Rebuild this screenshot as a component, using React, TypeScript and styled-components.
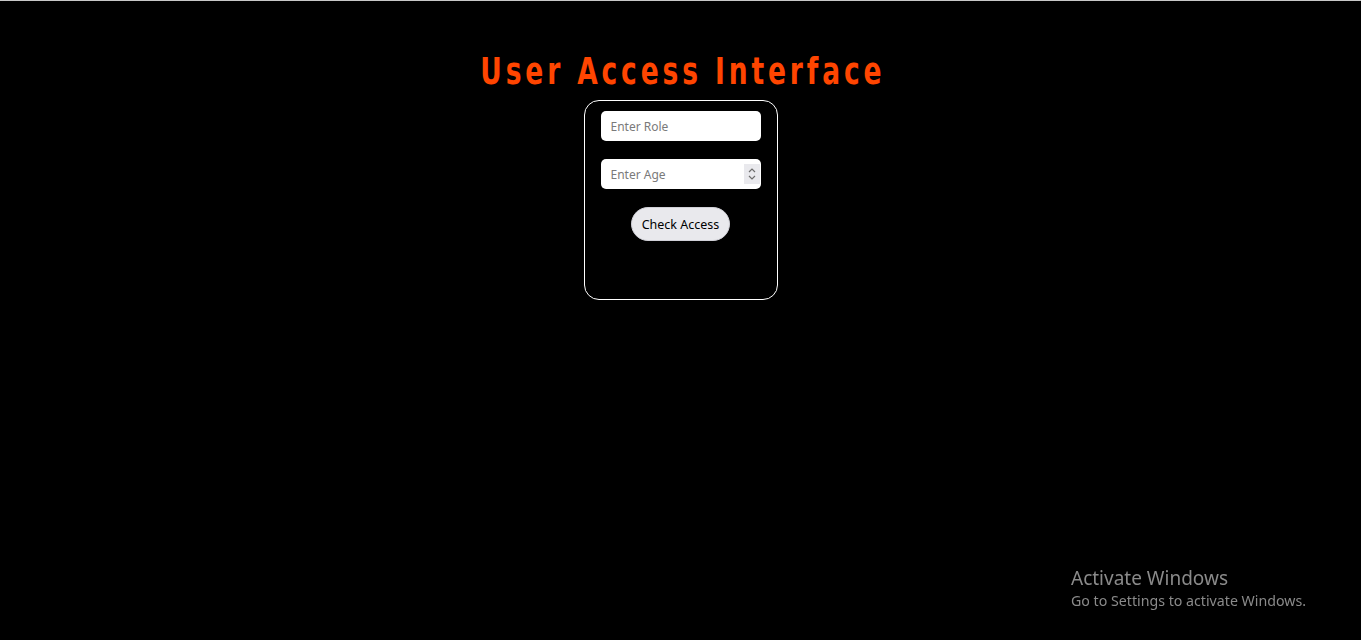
import React from 'react'
import styled, { createGlobalStyle } from 'styled-components'

const GlobalStyle = createGlobalStyle`
  html, body {
    margin: 0;
    padding: 0;
    background: #000;
    height: 100%;
  }
  body {
    border-top: 1px solid #c8c8c8;
    box-sizing: border-box;
    font-family: "Noto Sans", "Open Sans", sans-serif;
  }
`

const Page = styled.div`
  display: flex;
  flex-direction: column;
  align-items: center;
  min-height: 639px;
`

// no Impact here, so a condensed bold squeezed a little more
const Title = styled.h1`
  margin: 50px 0 9px;
  padding-left: 5px;
  font-family: "DejaVu Sans Condensed", "DejaVu Sans", sans-serif;
  font-weight: 700;
  font-size: 38px;
  line-height: 40px;
  letter-spacing: 5px;
  color: #ff4500;
  white-space: nowrap;
  transform: scaleX(0.775);
`

const Card = styled.form`
  width: 192px;
  border: 1px solid #fff;
  border-radius: 15px;
  padding: 10px 0 58px;
  display: flex;
  flex-direction: column;
  align-items: center;
  gap: 18px;
`

const Field = styled.div`
  position: relative;
  width: 160px;
  height: 30px;
`

const Input = styled.input`
  width: 100%;
  height: 100%;
  box-sizing: border-box;
  border: none;
  border-radius: 5px;
  padding: 0 10px;
  background: #fff;
  font-family: "Noto Sans", "Open Sans", sans-serif;
  font-size: 12px;
  color: #222;
  outline: none;
  &::placeholder {
    color: #7a7a7a;
  }
`

const Spinner = styled.div`
  position: absolute;
  right: 1px;
  top: 5px;
  width: 16px;
  height: 20px;
  background: #e9e9ed;
  display: flex;
  align-items: center;
  justify-content: center;
`

const Button = styled.button`
  width: 99px;
  height: 34px;
  border: 1px solid #d0d0d7;
  border-radius: 17px;
  background: #e9e9ed;
  color: #000;
  font-family: "Noto Sans", "Open Sans", sans-serif;
  font-size: 12.5px;
  padding: 0;
  cursor: pointer;
`

const Watermark = styled.div`
  position: fixed;
  left: 1071px;
  top: 566px;
  color: #8a8a8a;
  font-family: "Noto Sans", "Open Sans", sans-serif;
  pointer-events: none;
`

const WatermarkTitle = styled.div`
  font-size: 19px;
  line-height: 25px;
`

const WatermarkText = styled.div`
  font-size: 14.2px;
  line-height: 20px;
`

export default function App() {
  return (
    <>
      <GlobalStyle />
      <Page>
        <Title>User Access Interface</Title>
        <Card onSubmit={(e) => e.preventDefault()}>
          <Field>
            <Input type="text" placeholder="Enter Role" />
          </Field>
          <Field>
            <Input type="text" inputMode="numeric" placeholder="Enter Age" />
            <Spinner>
              <svg width="10" height="14" viewBox="0 0 10 14" fill="none" stroke="#6d6d6d" strokeWidth="1.2">
                <path d="M2 5 L5 2 L8 5" />
                <path d="M2 9 L5 12 L8 9" />
              </svg>
            </Spinner>
          </Field>
          <Button type="submit">Check Access</Button>
        </Card>
      </Page>
      <Watermark>
        <WatermarkTitle>Activate Windows</WatermarkTitle>
        <WatermarkText>Go to Settings to activate Windows.</WatermarkText>
      </Watermark>
    </>
  )
}
